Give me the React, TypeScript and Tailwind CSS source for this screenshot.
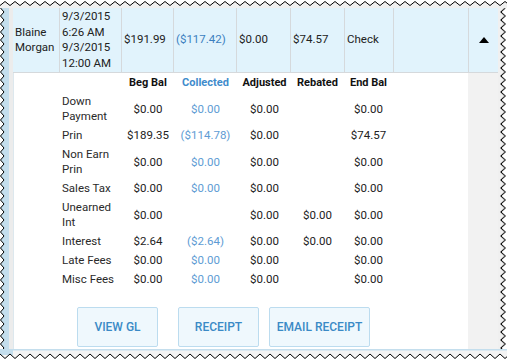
import React from "react";

function zig(len: number, period: number, lo: number, hi: number, horizontal: boolean) {
  const pts: string[] = [];
  let i = 0;
  for (let p = 0; p <= len + period; p += period / 2) {
    const v = i % 2 === 0 ? hi : lo;
    pts.push(horizontal ? `${p},${v}` : `${v},${p}`);
    i++;
  }
  return pts;
}

function TopEdge() {
  const pts = zig(507, 10, 1.5, 5.5, true);
  return (
    <svg width={507} height={8} className="block shrink-0">
      <rect width={507} height={8} fill="#ffffff" />
      <polygon points={`0,8 ${pts.join(" ")} 507,8`} fill="#f0f0f0" />
      <polyline points={pts.join(" ")} fill="none" stroke="#000" strokeWidth={1} />
    </svg>
  );
}

function BottomEdge() {
  const pts = zig(507, 10, 9.5, 5, true);
  return (
    <svg width={507} height={12} className="block shrink-0">
      <rect width={507} height={12} fill="#ffffff" />
      <polygon points={`0,0 ${pts.join(" ")} 507,0`} fill="#f4f4f4" />
      <rect x={0} y={0} width={507} height={1.5} fill="#c4deed" />
      <rect x={0} y={0} width={13} height={6} fill="#c4deed" />
      <polyline points={pts.join(" ")} fill="none" stroke="#000" strokeWidth={1} />
    </svg>
  );
}

function LeftEdge() {
  const pts = zig(341, 8, 4, 0.5, false);
  return (
    <svg width={9} height={341} className="block shrink-0">
      <rect width={9} height={341} fill="#c4deed" />
      <polygon points={`0,0 ${pts.join(" ")} 0,341`} fill="#ffffff" />
      <polyline points={pts.join(" ")} fill="none" stroke="#000" strokeWidth={1} />
    </svg>
  );
}

function RightEdge() {
  const pts = zig(341, 8, 3, 7.5, false);
  const pts2 = zig(341, 8, 2, 6.5, false);
  return (
    <svg width={9} height={341} className="block shrink-0">
      <rect width={9} height={341} fill="#f0f0f0" />
      <polygon points={`9,0 ${pts.join(" ")} 9,341`} fill="#ffffff" />
      <polyline points={pts2.join(" ")} fill="none" stroke="#a0a0a0" strokeWidth={1} />
      <polyline points={pts.join(" ")} fill="none" stroke="#000" strokeWidth={1} />
    </svg>
  );
}

const rows: { label: string; beg: string; col: string; adj: string; reb: string; end: string }[] = [
  { label: "Down Payment", beg: "$0.00", col: "$0.00", adj: "$0.00", reb: "", end: "$0.00" },
  { label: "Prin", beg: "$189.35", col: "($114.78)", adj: "$0.00", reb: "", end: "$74.57" },
  { label: "Non Earn Prin", beg: "$0.00", col: "$0.00", adj: "$0.00", reb: "", end: "$0.00" },
  { label: "Sales Tax", beg: "$0.00", col: "$0.00", adj: "$0.00", reb: "", end: "$0.00" },
  { label: "Unearned Int", beg: "$0.00", col: "", adj: "$0.00", reb: "$0.00", end: "$0.00" },
  { label: "Interest", beg: "$2.64", col: "($2.64)", adj: "$0.00", reb: "$0.00", end: "$0.00" },
  { label: "Late Fees", beg: "$0.00", col: "$0.00", adj: "$0.00", reb: "", end: "$0.00" },
  { label: "Misc Fees", beg: "$0.00", col: "$0.00", adj: "$0.00", reb: "", end: "$0.00" },
];

export default function App() {
  const cell = "border-r border-[#d5d9dc] flex items-center pl-[2px] leading-[15.5px]";
  return (
    <div className="w-[507px] h-[361px] bg-white flex flex-col overflow-hidden font-['Roboto',sans-serif] text-[11.5px] text-[#222]">
      <TopEdge />
      <div className="flex h-[341px]">
        <LeftEdge />
        <div className="w-[4px] bg-[#ececec]" />
        <div className="w-[485px] flex flex-col">
          <div className="h-[65px] flex bg-[#e1f3fc] border-b border-[#d5d9dc]">
            <div className={`${cell} w-[47px]`}>Blaine<br />Morgan</div>
            <div className={`${cell} w-[62px]`}>9/3/2015<br />6:26 AM<br />9/3/2015<br />12:00 AM</div>
            <div className={`${cell} w-[52px]`}>$191.99</div>
            <div className={`${cell} w-[63px] text-[#3b7fc0]`}>($117.42)</div>
            <div className={`${cell} w-[54px]`}>$0.00</div>
            <div className={`${cell} w-[54px]`}>$74.57</div>
            <div className={`${cell} w-[49px]`}>Check</div>
            <div className={`${cell} w-[75px]`} />
            <div className="w-[29px] flex items-center justify-center">
              <svg width={10} height={6} viewBox="0 0 10 6">
                <polygon points="5,0 10,6 0,6" fill="#000" />
              </svg>
            </div>
          </div>
          <div className="flex flex-1">
            <div className="w-[455px] bg-white border-l border-[#dde8ee] flex flex-col">
              <div className="ml-[48px] grid grid-cols-[58px_56px_59px_59px_47px_55px] leading-[15px] text-[11.5px]">
                <div className="py-[2px]" />
                <div className="py-[2px] text-center font-bold text-[11px] text-[#111]">Beg Bal</div>
                <div className="py-[2px] text-center font-bold text-[11px] text-[#3f8ccc]">Collected</div>
                <div className="py-[2px] text-center font-bold text-[11px] text-[#111]">Adjusted</div>
                <div className="py-[2px] text-center font-bold text-[11px] text-[#111]">Rebated</div>
                <div className="py-[2px] text-center font-bold text-[11px] text-[#111]">End Bal</div>
                {rows.map((r) => (
                  <React.Fragment key={r.label}>
                    <div className="py-[2px] text-[#2a2a2a]">{r.label}</div>
                    <div className="py-[2px] text-center flex items-center justify-center">{r.beg}</div>
                    <div className="py-[2px] text-center flex items-center justify-center text-[#5e9cd4]">{r.col}</div>
                    <div className="py-[2px] text-center flex items-center justify-center">{r.adj}</div>
                    <div className="py-[2px] text-center flex items-center justify-center">{r.reb}</div>
                    <div className="py-[2px] text-center flex items-center justify-center">{r.end}</div>
                  </React.Fragment>
                ))}
              </div>
              <div className="flex mt-[18px] ml-[63px]">
                <button className="w-[81px] h-[40px] bg-[#eff8fd] border border-[#bcdcef] rounded-[2px] text-[12px] font-medium text-[#3a8ac6]">VIEW GL</button>
                <button className="ml-[20px] w-[81px] h-[40px] bg-[#eff8fd] border border-[#bcdcef] rounded-[2px] text-[12px] font-medium text-[#3a8ac6]">RECEIPT</button>
                <button className="ml-[10px] w-[101px] h-[40px] bg-[#eff8fd] border border-[#bcdcef] rounded-[2px] text-[12px] font-medium text-[#3a8ac6]">EMAIL RECEIPT</button>
              </div>
            </div>
            <div className="w-[30px] bg-[#f2f2f2]" />
          </div>
        </div>
        <RightEdge />
      </div>
      <BottomEdge />
    </div>
  );
}
